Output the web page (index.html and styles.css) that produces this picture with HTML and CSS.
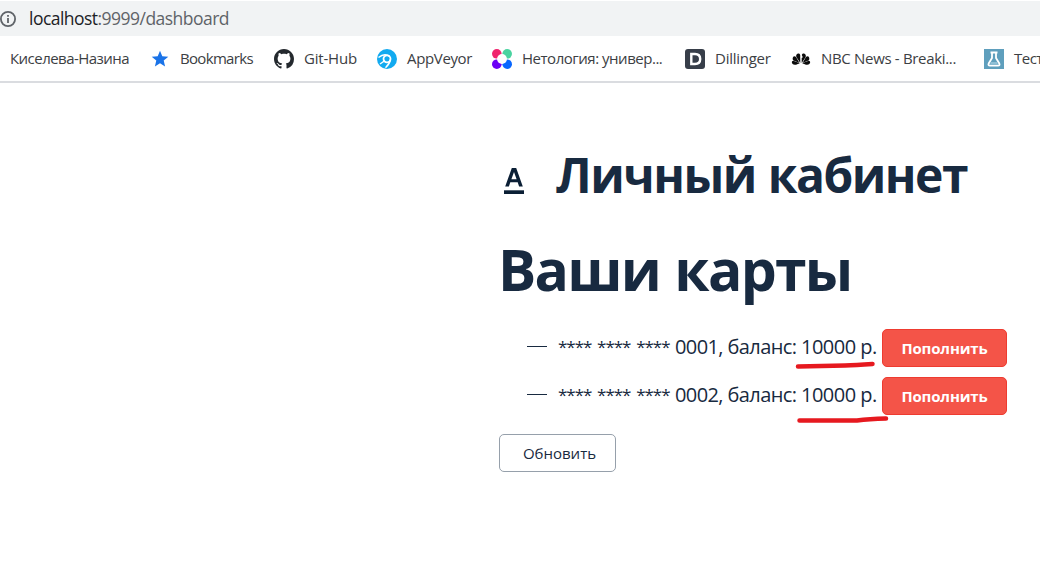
FILE: index.html
```
<!DOCTYPE html>
<html lang="ru">
<head>
<meta charset="utf-8">
<title>Личный кабинет</title>
<link rel="stylesheet" href="styles.css">
</head>
<body>
<header class="address">
  <svg class="info" viewBox="0 0 18 18"><circle cx="9" cy="9" r="7.1" fill="none" stroke="#5f6368" stroke-width="1.8"/><path d="M8.1 8h1.8v5H8.1zM8.1 5h1.8v1.8H8.1z" fill="#5f6368"/></svg>
  <span class="url"><span class="host">localhost</span>:9999/dashboard</span>
</header>
<nav class="bookmarks">
  <a class="bm bm-first"><span>Киселева-Назина</span></a>
  <a class="bm bm-star"><svg viewBox="0 0 20 20"><path d="M10 1.8l2.3 5.4 6 .5-4.6 3.9 1.4 5.8-5.1-3.1-5.1 3.1 1.4-5.8L1.7 7.700l6-.5z" fill="#1a73e8"/></svg><span>Bookmarks</span></a>
  <a class="bm bm-git"><svg viewBox="0 0 16 16"><path fill="#24292e" d="M8 0C3.580 0 0 3.580 0 8c0 3.540 2.290 6.530 5.470 7.590.4.070.550-.170.550-.380 0-.190-.010-.820-.010-1.490-2.010.370-2.530-.490-2.690-.940-.090-.230-.480-.940-.820-1.130-.280-.150-.680-.520-.010-.530.630-.010 1.080.580 1.230.820.720 1.210 1.870.870 2.330.660.070-.520.280-.870.510-1.070-1.780-.2-3.640-.890-3.640-3.950 0-.870.310-1.590.820-2.150-.080-.2-.360-1.020.080-2.120 0 0 .670-.210 2.200.820.640-.180 1.320-.270 2-.270s1.360.090 2 .270c1.530-1.040 2.200-.820 2.200-.820.440 1.100.160 1.920.080 2.120.510.560.820 1.270.820 2.150 0 3.070-1.870 3.750-3.650 3.950.290.250.540.730.540 1.480 0 1.070-.010 1.930-.010 2.200 0 .210.150.460.550.380A8.010 8.010 0 0 0 16 8c0-4.420-3.580-8-8-8z"/></svg><span>Git-Hub</span></a>
  <a class="bm bm-app"><svg viewBox="0 0 20 20"><circle cx="10" cy="10" r="10" fill="#12aaf0"/><circle cx="10" cy="9.800" r="3.500" fill="none" stroke="#fff" stroke-width="1.800"/><path d="M1.500 8.500C5 5.500 9 4.800 12.500 7.200M13.500 10.500C12.800 14 11 16.500 8.500 18.700M7.300 12L3 15" fill="none" stroke="#fff" stroke-width="1.500"/></svg><span>AppVeyor</span></a>
  <a class="bm bm-net"><svg viewBox="0 0 20 20"><circle cx="4.800" cy="4.800" r="4.800" fill="#f0246e"/><circle cx="15.200" cy="4.800" r="4.800" fill="#4ad3a0"/><circle cx="4.800" cy="15.200" r="4.800" fill="#6c00f5"/><circle cx="15.200" cy="15.200" r="4.800" fill="#0867ff"/><circle cx="10" cy="10" r="4.900" fill="#fff"/></svg><span>Нетология: универ...</span></a>
  <a class="bm bm-dil"><svg viewBox="0 0 20 20"><rect width="20" height="20" rx="3" fill="#373e49"/><path d="M6.300 5H10c3.300 0 5.200 1.800 5.200 5S13.300 15 10 15H6.300z" fill="none" stroke="#fff" stroke-width="2.400"/></svg><span>Dillinger</span></a>
  <a class="bm bm-nbc"><svg viewBox="0 0 20 20"><g fill="#0b0b0b"><path d="M9.300 14L5.300 8C4.300 4.500 8.300 3.200 9.200 6zM10.700 14L14.700 8C15.700 4.500 11.700 3.200 10.800 6L11.800 8.200 10.700 9z"/><path d="M8.500 14L2 11.300C.8 8.500 3 6 5 8zM11.500 14L18 11.300c1.200-2.800-1-5.300-3-3.300z"/><path d="M8.800 14.300L5 15.700C.5 16.500-.3 12 2.300 11.800zM11.200 14.300l3.800 1.400c4.500 .8 5.300-3.700 2.700-3.900z"/></g></svg><span>NBC News - Breaki...</span></a>
  <a class="bm bm-test"><svg viewBox="0 0 20 20"><rect width="20" height="20" fill="#5f9fbd"/><path d="M6.500 3.500h7M8 3.500v5.500L4.700 14.500Q3.800 16.700 6 16.700h8q2.200 0 1.300-2.200L12 9V3.500" fill="none" stroke="#fff" stroke-width="1.800"/><path d="M7 13h6l1 2.500H6z" fill="#8fc0d6"/></svg><span>Тест</span></a>
</nav>
<main class="page">
  <div class="title-row">
    <svg class="logo" viewBox="0 0 20 27"><path d="M7.800 0h4.400l6.600 18.500h-3.700l-1.400-4.200H6.300l-1.400 4.200H1.200zM10 4L7.400 11.300h5.200z" fill="#0b1f35"/><path d="M0 22.300h20v3.700H0z" fill="#0b1f35"/></svg>
    <h2 class="title">Личный кабинет</h2>
  </div>
  <h1 class="heading">Ваши карты</h1>
  <ul class="cards">
    <li class="card"><i class="dash"></i><p class="text"><span class="stars">**** **** ****</span><span class="desc">0001, баланс:</span><span class="sum">10000 р.<svg class="mark" viewBox="0 0 96 14"><path d="M5 8.500Q42 7.800 52 7.500T79.500 6" /></svg></span></p><button class="btn add">Пополнить</button></li>
    <li class="card"><i class="dash"></i><p class="text"><span class="stars">**** **** ****</span><span class="desc">0002, баланс:</span><span class="sum">10000 р.<svg class="mark mark-low" viewBox="0 0 96 14"><path d="M6.500 8.500H64Q76 7 93 6.500" /></svg></span></p><button class="btn add">Пополнить</button></li>
  </ul>
  <button class="btn reload">Обновить</button>
</main>
</body>
</html>
```
FILE: styles.css
```
* { box-sizing: border-box; }
body { margin: 0; width: 1040px; height: 588px; overflow: hidden; background: #fff; font-family: "Open Sans", "Noto Sans", sans-serif; color: #182a40; }
.address { height: 36px; border-top: 1px solid #fff; background: #f1f3f4; display: flex; align-items: center; }
.info { width: 18px; height: 18px; margin-left: -1px; }
.url { margin-left: 12px; padding-bottom: 2px; font-size: 17.500px; letter-spacing: -0.530px; color: #5f6368; white-space: nowrap; }
.host { color: #202124; }
.bookmarks { height: 47px; border-bottom: 2px solid #dadce0; display: flex; align-items: center; font-size: 15px; color: #3c4043; white-space: nowrap; overflow: hidden; }
.bm { display: flex; align-items: center; flex: none; gap: 10px; }
.bm span { padding-bottom: 2px; }
.bm svg { width: 20px; height: 20px; flex: none; }
.bm-first { width: 140px; margin-left: 10px; letter-spacing: -0.540px; }
.bm-star { width: 124px; letter-spacing: -0.680px; }
.bm-git { width: 103px; letter-spacing: -0.200px; }
.bm-app { width: 115px; letter-spacing: -0.350px; }
.bm-net { width: 193px; letter-spacing: -0.480px; }
.bm-dil { width: 106px; letter-spacing: -0.250px; }
.bm-nbc { width: 193px; letter-spacing: -0.320px; }
.bm-test { letter-spacing: -0.500px; }
.page { width: 520px; margin-left: 499px; padding-top: 60px; }
.title-row { display: flex; align-items: flex-start; height: 94px; }
.logo { width: 20px; height: 27px; margin: 25px 0 0 5px; }
.title { margin: 0 0 0 32px; font-size: 48px; line-height: 63px; letter-spacing: -1.520px; word-spacing: 1px; font-weight: 700; white-space: nowrap; }
.heading { margin: 0 0 0 -1px; font-size: 57px; line-height: 65px; letter-spacing: -1.700px; word-spacing: 1px; font-weight: 700; white-space: nowrap; }
.cards { list-style: none; margin: 27px 0 0; padding: 0 0 0 28px; }
.card { display: flex; align-items: center; height: 38px; margin-bottom: 10px; }
.dash { width: 20px; height: 1px; background: #182a40; margin-right: 11px; margin-top: -4px; }
.text { margin: 0 0 2px; width: 324px; display: flex; font-size: 20px; line-height: 30px; white-space: nowrap; }
.stars { width: 117px; font-size: 17px; letter-spacing: -1.050px; word-spacing: 2.500px; }
.desc { width: 126px; letter-spacing: -0.600px; }
.sum { position: relative; letter-spacing: -0.500px; }
.mark { position: absolute; left: -8px; top: 26px; width: 96px; height: 14px; fill: none; stroke: #e6191f; stroke-width: 4.500; stroke-linecap: round; }
.mark-low { top: 32px; }
.btn { font: inherit; font-size: 15px; border-radius: 5px; padding: 0; white-space: nowrap; }
.add { width: 125px; height: 38px; color: #fff; font-weight: 700; letter-spacing: -0.150px; background: #f45448; border: 1px solid #ee3b30; }
.reload { display: block; margin-top: 19px; width: 117px; height: 38px; padding-left: 4px; background: #fff; border: 1px solid #96a0ab; color: #182a40; }
```
